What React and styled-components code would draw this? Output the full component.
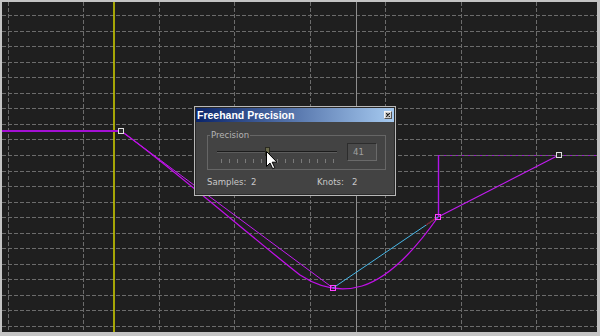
import React from "react";
import styled, { createGlobalStyle } from "styled-components";

const UI_FONT = `"DejaVu Sans Condensed", "DejaVu Sans", "Liberation Sans", Arial, sans-serif`;

const GlobalStyle = createGlobalStyle`
  html, body { margin: 0; padding: 0; background: #c4c4c4; }
  body { font-family: "Liberation Sans", Arial, sans-serif; }
`;

const Frame = styled.div`
  position: relative;
  width: 600px;
  height: 336px;
  box-sizing: border-box;
  border-style: solid;
  border-width: 2px 3px 4px 2px;
  border-color: #c4c4c4;
  background: #1f1f1f;
  overflow: hidden;
`;

const Canvas = styled.svg`
  display: block;
`;

const Dialog = styled.div`
  position: absolute;
  left: 192px;
  top: 104px;
  width: 202px;
  height: 90px;
  box-sizing: border-box;
  border: 1px solid #b8b8b8;
  box-shadow: inset 0 0 0 1px #2a2a2a;
  padding: 1px;
  background: #434343;
  display: flex;
  flex-direction: column;
`;

const TitleBar = styled.div`
  height: 14px;
  flex: none;
  display: flex;
  align-items: center;
  justify-content: space-between;
  padding: 0 2px 0 1px;
  background: linear-gradient(to right, #0a246a, #a6caf0);
  color: #ffffff;
  font: bold 10.5px/14px "Liberation Sans", Arial, sans-serif;
  white-space: nowrap;
`;

const CloseButton = styled.div`
  width: 8px;
  height: 8px;
  box-sizing: border-box;
  background: #cfcfcf;
  border: 1px solid;
  border-color: #f4f4f4 #555 #555 #f4f4f4;
  display: flex;
  align-items: center;
  justify-content: center;
`;

const Body = styled.div`
  padding: 8px 0 0 11px;
`;

const Group = styled.fieldset`
  margin: 0;
  padding: 3px 0 6px 2px;
  width: 179px;
  box-sizing: border-box;
  border: 1px solid #666666;
  min-width: 0;
`;

const Legend = styled.legend`
  padding: 0 1px;
  margin: 0;
  font: 9.5px/10px ${UI_FONT};
  color: #b4b4b4;
`;

const GroupRow = styled.div`
  display: flex;
  align-items: flex-start;
  margin-left: 7px;
  height: 20px;
`;

const Slider = styled.div`
  position: relative;
  width: 120px;
  height: 20px;
  display: flex;
  flex-direction: column;
`;

const Track = styled.div`
  margin-top: 8px;
  height: 1px;
  background: #1c1c1c;
  border-bottom: 1px solid #5c5c5c;
`;

const Ticks = styled.div`
  margin-top: 6px;
  display: flex;
  justify-content: space-between;
  padding: 0 3px 0 4px;
`;

const Tick = styled.span`
  width: 1px;
  height: 4px;
  background: #7a7a7a;
`;

const Thumb = styled.div`
  position: absolute;
  left: 48px;
  top: 4px;
  width: 5px;
  height: 9px;
  box-sizing: border-box;
  background: #6a6a4c;
  border: 1px solid #2a2a20;
`;

const NumberBox = styled.div`
  margin-left: 10px;
  width: 30px;
  height: 18px;
  box-sizing: border-box;
  border: 1px solid;
  border-color: #2c2c2c #6a6a6a #6a6a6a #2c2c2c;
  background: #4a4a4a;
  color: #a0a0a0;
  font: 9.5px/16px ${UI_FONT};
  padding-left: 5px;
`;

const StatsRow = styled.div`
  display: flex;
  margin-top: 6px;
  font: 9.5px/11px ${UI_FONT};
  color: #c8c8c8;
`;

const Stat = styled.div`
  display: flex;
  width: ${(p) => p.$width}px;
`;

const StatLabel = styled.span`
  width: ${(p) => p.$width}px;
`;

const Cursor = styled.svg`
  position: absolute;
  left: 263px;
  top: 148px;
`;

const GRID_X = Array.from({ length: 8 }, (_, k) => Math.round(8 + 75.43 * k) + 0.5);
const GRID_Y = Array.from({ length: 21 }, (_, k) => Math.round(15 + 15.55 * k) + 0.5);

const PURPLE = "#c21cf0";

function Knot({ x, y, color, fill }) {
  return (
    <rect x={x - 2.5} y={y - 2.5} width={5} height={5} fill={fill} stroke={color} strokeWidth={1} />
  );
}

function Viewport() {
  return (
    <Canvas width={595} height={330} viewBox="2 2 595 330">
      <line x1={438} y1={155.5} x2={597} y2={155.5} stroke="#9a18c8" strokeWidth={1} />
      <g stroke="#6c6c6c" strokeWidth={1} strokeDasharray="4 2">
        {GRID_X.map((x) => (
          <line key={"x" + x} x1={x} y1={2} x2={x} y2={332} />
        ))}
        {GRID_Y.map((y) => (
          <line key={"y" + y} x1={2} y1={y} x2={597} y2={y} />
        ))}
      </g>
      <line x1={356.5} y1={2} x2={356.5} y2={332} stroke="#8e8e8e" strokeWidth={1} />
      <line x1={114} y1={2} x2={114} y2={332} stroke="#c8c800" strokeWidth={1.6} />
      <line x1={2} y1={131} x2={119} y2={131} stroke="#a410d4" strokeWidth={2} />
      <line x1={121} y1={131} x2={333} y2={288} stroke={PURPLE} strokeWidth={1} />
      <path
        d="M121,131 C165,162 255,240 300,275 C320,288 342,292 362,286 C388,278 415,250 438,217"
        fill="none"
        stroke="#c010e8"
        strokeWidth={1.3}
      />
      <line x1={333} y1={288} x2={438} y2={217} stroke="#48b8e8" strokeWidth={1} />
      <line x1={426} y1={225} x2={436} y2={218} stroke="#7a1e2a" strokeWidth={1.2} />
      <line x1={438} y1={217} x2={559} y2={155} stroke={PURPLE} strokeWidth={1.2} />
      <line x1={438.5} y1={155} x2={438.5} y2={217} stroke="#b014e8" strokeWidth={1.4} />
      <Knot x={121} y={131} color="#e0e0e0" fill="#2a2a2a" />
      <Knot x={333} y={288} color="#ff40ff" fill="none" />
      <Knot x={438} y={217} color="#ff40ff" fill="none" />
      <Knot x={559} y={155} color="#e0e0e0" fill="#2a2a2a" />
    </Canvas>
  );
}

function FreehandDialog() {
  return (
    <Dialog>
      <TitleBar>
        <span>Freehand Precision</span>
        <CloseButton>
          <svg width="4" height="4" viewBox="0 0 4 4">
            <path d="M0,0 L4,4 M4,0 L0,4" stroke="#202020" strokeWidth="1.2" />
          </svg>
        </CloseButton>
      </TitleBar>
      <Body>
        <Group>
          <Legend>Precision</Legend>
          <GroupRow>
            <Slider>
              <Track />
              <Ticks>
                {Array.from({ length: 15 }, (_, i) => (
                  <Tick key={i} />
                ))}
              </Ticks>
              <Thumb />
            </Slider>
            <NumberBox>41</NumberBox>
          </GroupRow>
        </Group>
        <StatsRow>
          <Stat $width={110}>
            <StatLabel $width={44}>Samples:</StatLabel>
            <span>2</span>
          </Stat>
          <Stat $width={60}>
            <StatLabel $width={35}>Knots:</StatLabel>
            <span>2</span>
          </Stat>
        </StatsRow>
      </Body>
    </Dialog>
  );
}

export default function App() {
  return (
    <>
      <GlobalStyle />
      <Frame>
        <Viewport />
        <FreehandDialog />
        <Cursor width="13" height="20" viewBox="0 0 13 20">
          <path
            d="M1.5,1.5 L1.5,16.5 L5,13 L7.7,18.7 L9.8,17.7 L7.2,12.2 L12,12.2 Z"
            fill="#ffffff"
            stroke="#000000"
            strokeWidth="1"
            strokeLinejoin="miter"
          />
        </Cursor>
      </Frame>
    </>
  );
}
